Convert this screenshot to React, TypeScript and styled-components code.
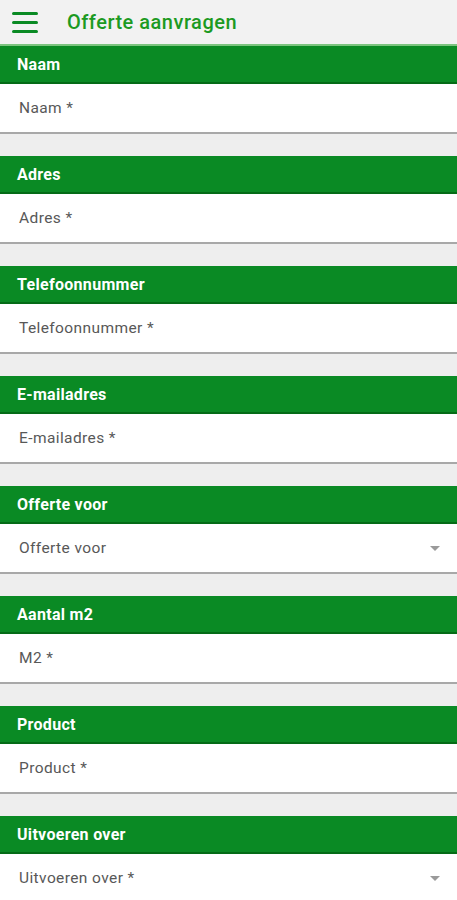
import React from "react";
import styled, { createGlobalStyle } from "styled-components";

const Global = createGlobalStyle`
  html, body { margin: 0; padding: 0; background: #eeeeee; }
  body { font-family: Roboto, "Noto Sans", sans-serif; overflow: hidden; }
`;

const GREEN = "#0a8a24";

const Page = styled.div`
  width: 457px;
  display: flex;
  flex-direction: column;
`;

const TopBar = styled.header`
  height: 44px;
  display: flex;
  align-items: center;
  background: #f2f2f2;
  border-bottom: 2px solid #7cc47f;
  padding-left: 12px;
  gap: 29px;
`;

const Burger = styled.div`
  width: 26px;
  display: flex;
  flex-direction: column;
  gap: 6px;
  & > span {
    display: block;
    height: 3px;
    border-radius: 2px;
    background: ${GREEN};
  }
`;

const Title = styled.h1`
  margin: 0;
  font-size: 20px;
  font-weight: 500;
  color: #1c9a22;
  letter-spacing: 0.5px;
`;

const Section = styled.section<{ $last?: boolean }>`
  display: flex;
  flex-direction: column;
  margin-bottom: ${(p) => (p.$last ? 0 : 22)}px;
`;

const SectionHeader = styled.div`
  height: 36px;
  background: ${GREEN};
  border-bottom: 2px solid #056b16;
  display: flex;
  align-items: center;
  padding-left: 17px;
  color: #ffffff;
  font-size: 16px;
  font-weight: 700;
  letter-spacing: 0.3px;
`;

const Field = styled.div`
  height: 48px;
  background: #ffffff;
  border-bottom: 2px solid #a8a8a8;
  display: flex;
  align-items: center;
  justify-content: space-between;
  padding: 0 17px 0 19px;
  color: #585858;
  font-size: 15.5px;
  letter-spacing: 0.4px;
`;

const Caret = styled.span`
  width: 0;
  height: 0;
  border-left: 5px solid transparent;
  border-right: 5px solid transparent;
  border-top: 5px solid #9a9a9a;
`;

const sections: { title: string; placeholder: string; select?: boolean }[] = [
  { title: "Naam", placeholder: "Naam *" },
  { title: "Adres", placeholder: "Adres *" },
  { title: "Telefoonnummer", placeholder: "Telefoonnummer *" },
  { title: "E-mailadres", placeholder: "E-mailadres *" },
  { title: "Offerte voor", placeholder: "Offerte voor", select: true },
  { title: "Aantal m2", placeholder: "M2 *" },
  { title: "Product", placeholder: "Product *" },
  { title: "Uitvoeren over", placeholder: "Uitvoeren over *", select: true },
];

export default function App() {
  return (
    <>
      <Global />
      <Page>
        <TopBar>
          <Burger>
            <span />
            <span />
            <span />
          </Burger>
          <Title>Offerte aanvragen</Title>
        </TopBar>
        {sections.map((s, i) => (
          <Section key={s.title} $last={i === sections.length - 1}>
            <SectionHeader>{s.title}</SectionHeader>
            <Field>
              <span>{s.placeholder}</span>
              {s.select && <Caret />}
            </Field>
          </Section>
        ))}
      </Page>
    </>
  );
}
